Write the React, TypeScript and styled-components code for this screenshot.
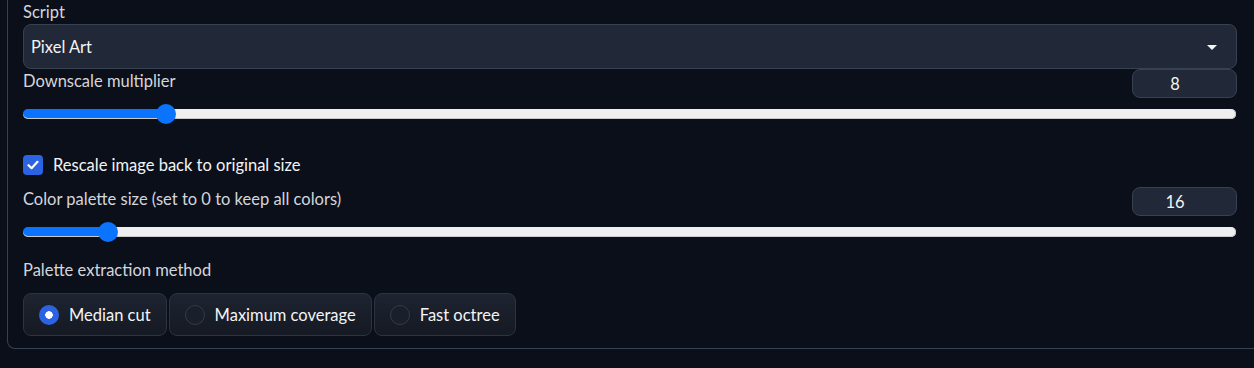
import React from "react";
import styled, { createGlobalStyle } from "styled-components";

const GlobalStyle = createGlobalStyle`
  html, body {
    margin: 0;
    padding: 0;
    background: #0b0f19;
    overflow: hidden;
  }
  body {
    font-family: "Lato", "Open Sans", sans-serif;
    font-size: 16.5px;
    color: #e5e7eb;
  }
`;

const Panel = styled.div`
  margin-left: 7px;
  width: 1247px;
  box-sizing: border-box;
  border-left: 1px solid #374151;
  border-bottom: 1px solid #374151;
  border-bottom-left-radius: 8px;
  padding: 2px 17px 12px 15px;
  display: flex;
  flex-direction: column;
`;

const Label = styled.div<{ $mt?: number }>`
  line-height: 20px;
  color: #d4d6dc;
  margin-top: ${(p) => p.$mt ?? 0}px;
`;

const Dropdown = styled.div`
  margin-top: 2px;
  height: 45px;
  box-sizing: border-box;
  border: 1px solid #374151;
  border-radius: 8px;
  background: #212837;
  display: flex;
  align-items: center;
  justify-content: space-between;
  padding: 0 19px 0 7px;
  color: #f3f4f6;
  line-height: 20px;
`;

const Caret = styled.span`
  width: 0;
  height: 0;
  border-left: 5px solid transparent;
  border-right: 5px solid transparent;
  border-top: 5px solid #f3f4f6;
  margin-top: 1px;
`;

const SliderHead = styled.div<{ $mt?: number }>`
  display: flex;
  justify-content: space-between;
  align-items: flex-start;
  margin-top: ${(p) => p.$mt ?? 0}px;
`;

const NumberBox = styled.div`
  width: 105px;
  height: 29px;
  box-sizing: border-box;
  border: 1px solid #374151;
  border-radius: 8px;
  background: #212837;
  display: flex;
  align-items: center;
  justify-content: center;
  padding-right: 19px;
  color: #f3f4f6;
  line-height: 20px;
`;

const Range = styled.input.attrs({ type: "range" })`
  -webkit-appearance: none;
  appearance: none;
  display: block;
  width: 1213px;
  height: 20px;
  margin: 6px 0 0 0;
  background: transparent;
  &::-webkit-slider-runnable-track {
    height: 10px;
    border-radius: 5px;
    background: linear-gradient(
      to right,
      #0b74ff var(--fill),
      #efefef var(--fill)
    );
    box-shadow: inset 0 -1px 0 #c9c9c9, inset -1px 0 0 #c9c9c9;
  }
  &::-webkit-slider-thumb {
    -webkit-appearance: none;
    appearance: none;
    width: 20px;
    height: 20px;
    border-radius: 50%;
    border: none;
    background: #0b74ff;
    margin-top: -5px;
  }
`;

const CheckRow = styled.label`
  display: flex;
  align-items: center;
  gap: 10px;
  margin-top: 31px;
  line-height: 20px;
  color: #f3f4f6;
`;

const CheckBox = styled.span`
  width: 20px;
  height: 20px;
  border-radius: 4px;
  background: #2b63e3;
  display: flex;
  align-items: center;
  justify-content: center;
`;

const RadioGroup = styled.div`
  display: flex;
  gap: 2px;
  margin-top: 13px;
`;

const RadioItem = styled.label`
  display: flex;
  align-items: center;
  gap: 10px;
  height: 43px;
  box-sizing: border-box;
  padding: 0 15px 0 15px;
  border: 1px solid #2d3340;
  border-radius: 8px;
  background: linear-gradient(to bottom, #1e2430, #141923);
  color: #f3f4f6;
  line-height: 20px;
`;

const RadioDot = styled.span<{ $checked: boolean }>`
  width: 20px;
  height: 20px;
  box-sizing: border-box;
  border-radius: 50%;
  ${(p) =>
    p.$checked
      ? `background: radial-gradient(circle, #ffffff 0 3.5px, #2b63e3 4px);`
      : `background: #191f2b; border: 1px solid #343b49;`}
`;

type SliderProps = { label: string; value: number; min: number; max: number; mt: number };

function Slider({ label, value, min, max, mt }: SliderProps) {
  const frac = (value - min) / (max - min);
  const fill = `calc(10px + ${frac} * (100% - 20px))`;
  return (
    <>
      <SliderHead $mt={mt}>
        <Label $mt={2}>{label}</Label>
        <NumberBox>{value}</NumberBox>
      </SliderHead>
      <Range
        min={min}
        max={max}
        defaultValue={value}
        style={{ ["--fill" as any]: fill }}
      />
    </>
  );
}

const radios = ["Median cut", "Maximum coverage", "Fast octree"];

export default function App() {
  return (
    <>
      <GlobalStyle />
      <Panel>
        <Label>Script</Label>
        <Dropdown>
          <span>Pixel Art</span>
          <Caret />
        </Dropdown>
        <Slider label="Downscale multiplier" value={8} min={1} max={64} mt={0} />
        <CheckRow>
          <CheckBox>
            <svg width="12" height="10" viewBox="0 0 12 10">
              <path
                d="M1.5 5.2 L4.6 8.2 L10.5 1.8"
                fill="none"
                stroke="#fff"
                strokeWidth="2.2"
                strokeLinecap="round"
                strokeLinejoin="round"
              />
            </svg>
          </CheckBox>
          Rescale image back to original size
        </CheckRow>
        <Slider label="Color palette size (set to 0 to keep all colors)" value={16} min={0} max={256} mt={12} />
        <Label $mt={18}>Palette extraction method</Label>
        <RadioGroup>
          {radios.map((r, i) => (
            <RadioItem key={r}>
              <RadioDot $checked={i === 0} />
              {r}
            </RadioItem>
          ))}
        </RadioGroup>
      </Panel>
    </>
  );
}
